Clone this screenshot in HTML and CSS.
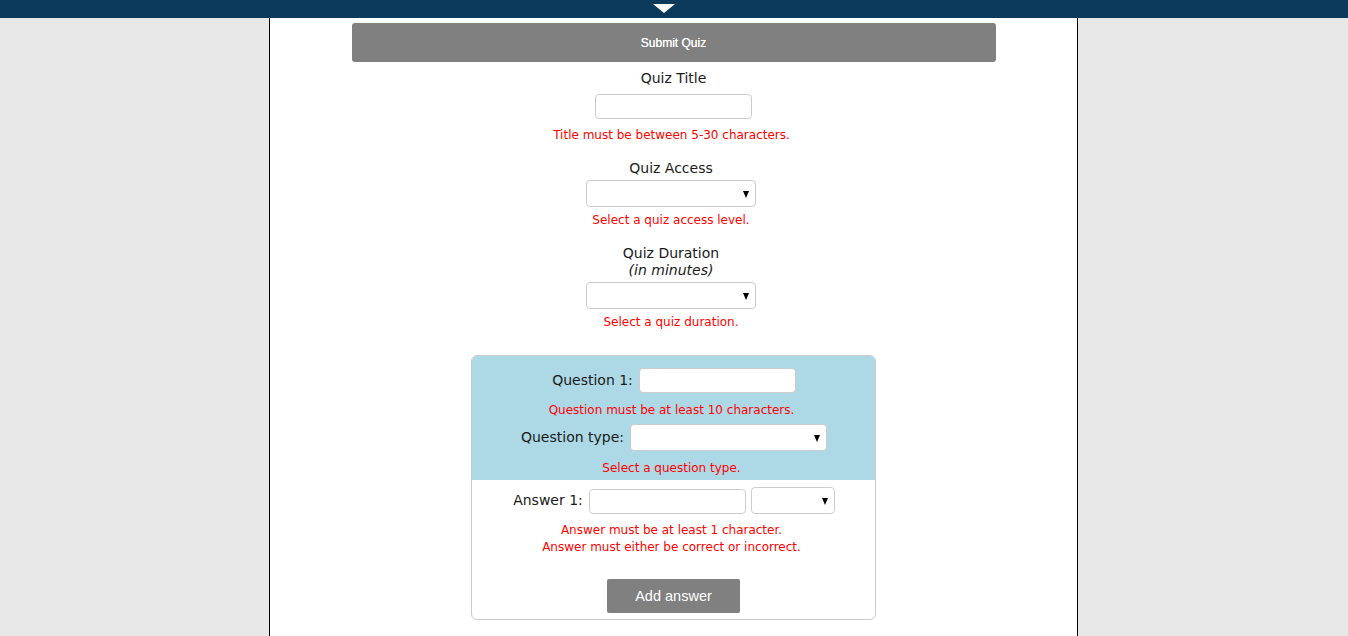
FILE: index.html
```html
<!DOCTYPE html>
<html>
<head>
<meta charset="utf-8">
<title>Create Quiz</title>
<link rel="stylesheet" href="styles.css">
</head>
<body>
<header class="topbar"><span class="toggle"></span></header>
<main class="page">
  <button class="submit-btn" type="button">Submit Quiz</button>

  <section class="field field-title">
    <label class="field-label">Quiz Title</label>
    <input class="text-input title-input" type="text">
    <p class="error">Title must be between 5-30 characters.</p>
  </section>

  <section class="field field-gap">
    <label class="field-label">Quiz Access</label>
    <span class="select-wrap select-main"><select class="select"></select></span>
    <p class="error error-tight">Select a quiz access level.</p>
  </section>

  <section class="field field-gap">
    <label class="field-label">Quiz Duration<br><em>(in minutes)</em></label>
    <span class="select-wrap select-main"><select class="select"></select></span>
    <p class="error error-tight">Select a quiz duration.</p>
  </section>

  <section class="question-box">
    <div class="question-head">
      <div class="row row-q">
        <label class="row-label">Question 1:</label>
        <input class="text-input q-input" type="text">
      </div>
      <p class="error error-q1">Question must be at least 10 characters.</p>
      <div class="row row-type">
        <label class="row-label">Question type:</label>
        <span class="select-wrap select-type"><select class="select"></select></span>
      </div>
      <p class="error error-q2">Select a question type.</p>
    </div>
    <div class="answers">
      <div class="row row-answer">
        <label class="row-label">Answer 1:</label>
        <input class="text-input a-input" type="text">
        <span class="select-wrap select-answer"><select class="select"></select></span>
      </div>
      <p class="error error-answer">Answer must be at least 1 character.<br>Answer must either be correct or incorrect.</p>
      <button class="add-btn" type="button">Add answer</button>
    </div>
  </section>
</main>
</body>
</html>
```

FILE: styles.css
```css
html, body {
  margin: 0;
  padding: 0;
}
body {
  background: #e8e8e8;
  font-family: "DejaVu Sans", Verdana, sans-serif;
  color: #1a1a1a;
  min-height: 636px;
}
.topbar {
  height: 18px;
  background: #0b3a5c;
  display: flex;
  justify-content: center;
  align-items: flex-start;
}
.toggle {
  display: block;
  width: 0;
  height: 0;
  margin-top: 4px;
  margin-right: 21px;
  border-left: 11px solid transparent;
  border-right: 11px solid transparent;
  border-top: 9px solid #ffffff;
}
.page {
  width: 809px;
  margin: 0 0 0 calc(50% - 405px);
  background: #ffffff;
  border-left: 1px solid #000;
  border-right: 1px solid #000;
  min-height: 618px;
  display: flex;
  flex-direction: column;
  align-items: center;
  text-align: center;
  padding-bottom: 16px;
  box-sizing: border-box;
}
.submit-btn {
  margin-top: 5px;
  width: 644px;
  height: 39px;
  background: #808080;
  color: #fff;
  border: none;
  border-radius: 3px;
  font-family: "Liberation Sans", Arial, sans-serif;
  font-size: 12px;
  padding: 0;
  text-shadow: 0 0 0.3px #fff;
}
.field {
  display: flex;
  flex-direction: column;
  align-items: center;
}
.field-title {
  margin-top: 8px;
}
.field-gap {
  margin-top: 17px;
  padding-right: 5px;
}
.field-label {
  font-size: 14px;
  line-height: 17px;
  display: block;
}
.field-label em {
  font-style: italic;
}
.text-input {
  box-sizing: border-box;
  height: 25px;
  border: 1px solid #cccccc;
  border-radius: 4px;
  background: #fff;
  padding: 0 4px;
  margin: 0;
  font-family: inherit;
}
.title-input {
  width: 157px;
  margin-top: 7px;
}
.error {
  margin: 9px 0 0;
  padding-right: 4px;
  color: #ff0000;
  font-size: 12px;
  line-height: 15px;
}
.field-gap .error {
  padding-right: 0;
}
.error-tight {
  margin-top: 6px;
}
.select-wrap {
  position: relative;
  display: block;
}
.select-wrap::after {
  content: "";
  position: absolute;
  right: 7px;
  top: 50%;
  margin-top: -3px;
  width: 0;
  height: 0;
  border-left: 3.5px solid transparent;
  border-right: 3.5px solid transparent;
  border-top: 7px solid #000;
  pointer-events: none;
}
.select {
  -webkit-appearance: none;
  appearance: none;
  box-sizing: border-box;
  width: 100%;
  height: 27px;
  border: 1px solid #cccccc;
  border-radius: 4px;
  background: #fff;
  margin: 0;
  display: block;
}
.select-main {
  width: 170px;
  margin-top: 3px;
}
.question-box {
  margin-top: 25px;
  width: 405px;
  box-sizing: border-box;
  border: 1px solid #cccccc;
  border-radius: 6px;
  overflow: hidden;
  display: flex;
  flex-direction: column;
}
.question-head {
  background: #add8e6;
  padding: 12px 0 4px;
  display: flex;
  flex-direction: column;
  align-items: center;
}
.row {
  display: flex;
  align-items: center;
  justify-content: center;
  gap: 6px;
  margin-left: 1px;
}
.row-label {
  font-size: 14px;
  line-height: 17px;
}
.q-input {
  width: 157px;
}
.error-q1 {
  margin-top: 10px;
}
.row-type {
  margin-top: 6px;
}
.select-type {
  width: 197px;
}
.error-q2 {
  margin-top: 10px;
}
.answers {
  padding: 7px 0 6px;
  display: flex;
  flex-direction: column;
  align-items: center;
}
.row-answer {
  align-items: flex-end;
  gap: 0;
}
.row-answer .row-label {
  margin-right: 6px;
  align-self: center;
}
.a-input {
  width: 157px;
}
.select-answer {
  width: 84px;
  margin-left: 5px;
}
.error-answer {
  margin-top: 8px;
  line-height: 17px;
}
.add-btn {
  margin-top: 23px;
  width: 133px;
  height: 34px;
  background: #808080;
  color: #fff;
  border: none;
  border-radius: 2px;
  font-family: "Liberation Sans", Arial, sans-serif;
  font-size: 14.5px;
  padding: 0;
}
```
